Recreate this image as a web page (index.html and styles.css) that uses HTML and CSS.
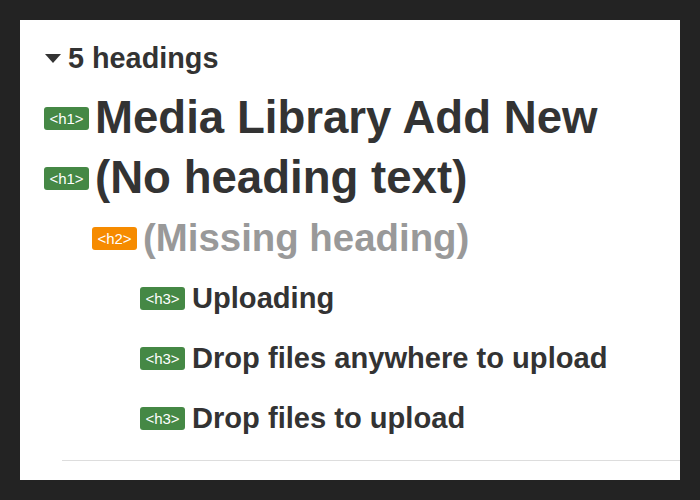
FILE: index.html
```html
<!DOCTYPE html>
<html>
	<head>
		<meta charset="utf-8">
		<link rel="stylesheet" href="styles.css">
	</head>
	<body>
		<div id="panel">
			<details class="outline" open>
				<summary class="row summary"><span class="arrow"></span>5 headings</summary>
				<ul class="tree">
					<li class="row lvl1"><span class="tag ok">&lt;h1&gt;</span><span class="h1">Media Library Add New</span></li>
					<li class="row lvl1"><span class="tag ok">&lt;h1&gt;</span><span class="h1">(No heading text)</span></li>
					<li class="row lvl2"><span class="tag warn">&lt;h2&gt;</span><span class="h2 missing">(Missing heading)</span></li>
					<li class="row lvl3"><span class="tag ok">&lt;h3&gt;</span><span class="h3">Uploading</span></li>
					<li class="row lvl3"><span class="tag ok">&lt;h3&gt;</span><span class="h3">Drop files anywhere to upload</span></li>
					<li class="row lvl3"><span class="tag ok">&lt;h3&gt;</span><span class="h3">Drop files to upload</span></li>
				</ul>
			</details>
			<div class="rule"></div>
		</div>
	</body>
</html>
```

FILE: styles.css
```css
html, body {
	margin: 0;
	background-color: #232323;
}
body {
	padding: 20px;
	font-family: "Liberation Sans", Arial, sans-serif;
	color: #333333;
}
#panel {
	background-color: #ffffff;
	height: 460px;
	padding: 8px 0 0 24px;
	box-sizing: border-box;
}
.outline {
	margin: 0;
}
.row {
	display: flex;
	align-items: center;
	height: 60px;
	white-space: nowrap;
}
.summary {
	list-style: none;
	font-size: 28.8px;
	font-weight: bold;
	cursor: pointer;
}
.summary::-webkit-details-marker {
	display: none;
}
.arrow {
	width: 0;
	height: 0;
	border-left: 8px solid transparent;
	border-right: 8px solid transparent;
	border-top: 9px solid #333333;
	margin: 0 7px 0 1px;
}
.tree {
	list-style: none;
	margin: 0;
	padding: 0;
}
.lvl2 {
	padding-left: 48px;
}
.lvl3 {
	padding-left: 96px;
}
.tag {
	display: inline-block;
	height: 23px;
	line-height: 23px;
	padding: 0 4px;
	min-width: 37px;
	text-align: center;
	border-radius: 3px;
	color: #ffffff;
	font-size: 15px;
	margin-right: 6px;
}
.ok {
	background-color: #458845;
}
.warn {
	background-color: #f68b00;
}
.h1, .h2, .h3 {
	font-weight: bold;
}
.h1 {
	font-size: 45.6px;
}
.h2 {
	font-size: 38.4px;
}
.h3 {
	font-size: 29.1px;
	margin-left: 1px;
}
.missing {
	color: #999999;
}
.rule {
	margin: 12px 0 0 18px;
	border-top: 1px solid #dddddd;
}
```
